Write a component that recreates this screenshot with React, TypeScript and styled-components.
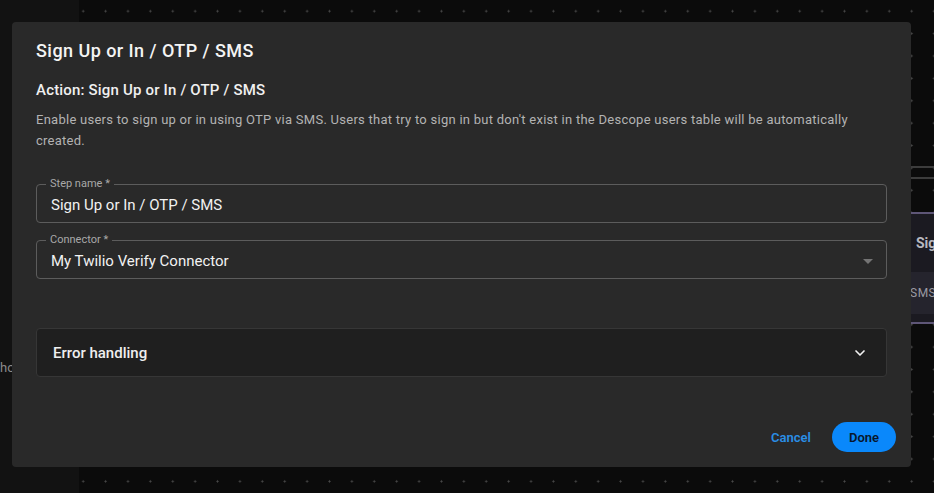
import React from "react";
import styled, { createGlobalStyle } from "styled-components";
import { ChevronDown } from "lucide-react";

const GlobalStyle = createGlobalStyle`
  html, body {
    margin: 0;
    padding: 0;
    background: #0b0b0b;
    font-family: Roboto, "Liberation Sans", sans-serif;
    -webkit-font-smoothing: antialiased;
  }
  * {
    box-sizing: border-box;
  }
`;

const App = () => {
  return (
    <>
      <GlobalStyle />
      <Page>
        <Sidebar>
          <SidebarText>ho</SidebarText>
        </Sidebar>
        <Canvas>
          <Edge style={{ top: 166 }} />
          <Edge style={{ top: 177 }} />
          <FlowNode>
            <NodeHead>Sign Up or In</NodeHead>
            <NodeSub>SMS</NodeSub>
          </FlowNode>
        </Canvas>
        <Modal>
          <Title>Sign Up or In / OTP / SMS</Title>
          <ActionTitle>Action: Sign Up or In / OTP / SMS</ActionTitle>
          <Description>
            Enable users to sign up or in using OTP via SMS. Users that try to sign in but don't exist in the Descope users
            table will be automatically created.
          </Description>
          <Fields>
            <Field>
              <Legend>Step name *</Legend>
              <Value>Sign Up or In / OTP / SMS</Value>
            </Field>
            <Field>
              <Legend>Connector *</Legend>
              <SelectRow>
                <Value>My Twilio Verify Connector</Value>
                <Caret />
              </SelectRow>
            </Field>
          </Fields>
          <Accordion>
            <span>Error handling</span>
            <ChevronDown size={16} strokeWidth={2.5} color="#f2f2f2" />
          </Accordion>
          <Footer>
            <TextButton>Cancel</TextButton>
            <PrimaryButton>Done</PrimaryButton>
          </Footer>
        </Modal>
      </Page>
    </>
  );
};

export default App;

const Page = styled.div`
  position: relative;
  display: flex;
  width: 934px;
  height: 493px;
  overflow: hidden;
`;

const Sidebar = styled.div`
  width: 79px;
  background: #121212;
  padding-top: 360px;
  overflow: hidden;
`;

const SidebarText = styled.div`
  font-size: 13px;
  color: #8a8a8a;
`;

const Canvas = styled.div`
  position: relative;
  flex: 1;
  background-color: #0b0b0b;
  background-image: radial-gradient(circle, #4a4a4a 0.8px, transparent 1.3px);
  background-size: 22.4px 22.4px;
  background-position: -7px 0px;
`;

const Edge = styled.div`
  position: absolute;
  right: 0;
  width: 60px;
  height: 2px;
  background: #3c3c3c;
`;

const FlowNode = styled.div`
  position: absolute;
  top: 212px;
  right: -80px;
  width: 200px;
  height: 112px;
  background: #1b1a21;
  border-top: 2px solid #5e5677;
  border-bottom: 2px solid #5e5677;
  display: flex;
  flex-direction: column;
`;

const NodeHead = styled.div`
  height: 58px;
  display: flex;
  align-items: center;
  padding-left: 102px;
  font-size: 14px;
  font-weight: 700;
  color: #b8b8c0;
  white-space: nowrap;
`;

const NodeSub = styled.div`
  height: 42px;
  background: #25242d;
  display: flex;
  align-items: center;
  padding-left: 96px;
  font-size: 12px;
  color: #9a9aa2;
  letter-spacing: 0.5px;
`;

const Modal = styled.div`
  position: absolute;
  left: 12px;
  top: 22px;
  width: 899px;
  height: 445px;
  background: #292929;
  border-radius: 4px;
  padding: 17px 24px 15px 24px;
  display: flex;
  flex-direction: column;
  color: #f2f2f2;
`;

const Title = styled.h2`
  margin: 0;
  font-size: 18px;
  line-height: 24px;
  font-weight: 500;
  letter-spacing: 0.45px;
  color: #f4f4f4;
`;

const ActionTitle = styled.h3`
  margin: 17px 0 0;
  font-size: 15px;
  line-height: 20px;
  font-weight: 500;
  letter-spacing: 0.18px;
  color: #f0f0f0;
`;

const Description = styled.p`
  margin: 9px 0 0;
  font-size: 13px;
  line-height: 21px;
  letter-spacing: 0.26px;
  color: #b3b3b3;
  padding-right: 20px;
`;

const Fields = styled.div`
  margin-top: 27px;
  display: flex;
  flex-direction: column;
  gap: 11px;
`;

const Field = styled.fieldset`
  margin: 0;
  padding: 0 13px 7px 9px;
  border: 1px solid #5c5c5c;
  border-radius: 4px;
  min-width: 0;
`;

const Legend = styled.legend`
  padding: 0 4px;
  font-size: 11px;
  line-height: 12px;
  color: #a8a8a8;
`;

const Value = styled.div`
  padding: 5px 0 0 5px;
  font-size: 15px;
  line-height: 20px;
  color: #f2f2f2;
`;

const SelectRow = styled.div`
  display: flex;
  align-items: center;
  justify-content: space-between;
`;

const Caret = styled.span`
  width: 0;
  height: 0;
  margin-top: 5px;
  border-left: 5px solid transparent;
  border-right: 5px solid transparent;
  border-top: 5px solid #747474;
`;

const Accordion = styled.div`
  margin-top: 49px;
  height: 49px;
  background: #1f1f1f;
  border: 1px solid #363636;
  border-radius: 4px;
  display: flex;
  align-items: center;
  justify-content: space-between;
  padding: 0 18px 0 16px;
  font-size: 15px;
  font-weight: 500;
  color: #efefef;
`;

const Footer = styled.div`
  margin-top: auto;
  margin-right: -9px;
  display: flex;
  align-items: center;
  justify-content: flex-end;
  gap: 13px;
`;

const TextButton = styled.button`
  background: none;
  border: none;
  padding: 0 8px;
  font-family: inherit;
  font-size: 13px;
  font-weight: 600;
  color: #2a8ee6;
  cursor: pointer;
`;

const PrimaryButton = styled.button`
  width: 64px;
  height: 30px;
  border: none;
  border-radius: 15px;
  background: #0a88fb;
  font-family: inherit;
  font-size: 13px;
  font-weight: 600;
  color: #08162c;
  cursor: pointer;
`;
